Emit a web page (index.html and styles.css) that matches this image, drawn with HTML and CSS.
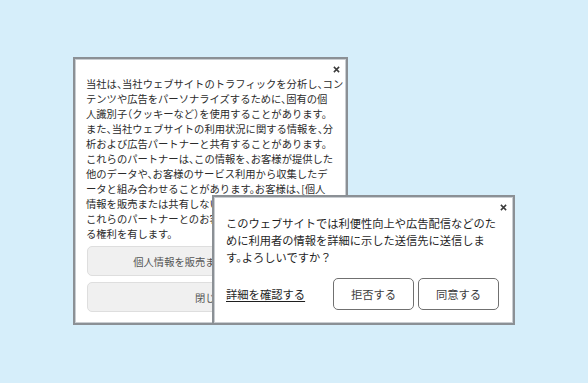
FILE: index.html
```html
<!DOCTYPE html>
<html lang="ja">

<head>
    <meta charset="UTF-8">
    <meta name="viewport" content="width=device-width, initial-scale=1.0">
    <title>Cookie Consent</title>
    <link rel="stylesheet" href="styles.css">
</head>

<body>
    <div class="stage">
        <div class="dialog dialog-back">
            <div class="close-row">
                <button class="close" aria-label="閉じる">
                    <svg viewBox="0 0 8 8" xmlns="http://www.w3.org/2000/svg">
                        <path d="M1 1L7 7M7 1L1 7" />
                    </svg>
                </button>
            </div>
            <p class="notice">
                <span class="line">当社は、当社ウェブサイトのトラフィックを分析し、コン</span>
                <span class="line">テンツや広告をパーソナライズするために、固有の個</span>
                <span class="line">人識別子（クッキーなど）を使用することがあります。</span>
                <span class="line">また、当社ウェブサイトの利用状況に関する情報を、分</span>
                <span class="line">析および広告パートナーと共有することがあります。</span>
                <span class="line">これらのパートナーは、この情報を、お客様が提供した</span>
                <span class="line">他のデータや、お客様のサービス利用から収集したデ</span>
                <span class="line">ータと組み合わせることがあります。お客様は、[個人</span>
                <span class="line">情報を販売または共有しないよう求める]ことにより、</span>
                <span class="line">これらのパートナーとのお客様の情報の共有を停止す</span>
                <span class="line">る権利を有します。</span>
            </p>
            <div class="stack">
                <button class="soft-btn">個人情報を販売または共有しない</button>
                <button class="soft-btn">閉じる</button>
            </div>
        </div>

        <div class="dialog dialog-front">
            <div class="close-row">
                <button class="close" aria-label="閉じる">
                    <svg viewBox="0 0 8 8" xmlns="http://www.w3.org/2000/svg">
                        <path d="M1 1L7 7M7 1L1 7" />
                    </svg>
                </button>
            </div>
            <p class="question">
                <span class="line">このウェブサイトでは利便性向上や広告配信などのた</span>
                <span class="line">めに利用者の情報を詳細に示した送信先に送信しま</span>
                <span class="line">す。よろしいですか？</span>
            </p>
            <div class="actions">
                <a class="details" href="#">詳細を確認する</a>
                <div class="choice">
                    <button class="line-btn">拒否する</button>
                    <button class="line-btn">同意する</button>
                </div>
            </div>
        </div>
    </div>
</body>

</html>
```

FILE: styles.css
```css
body {
    margin: 0;
    background-color: #d6eefa;
    /* Fondo azul claro */
    font-family: "Noto Sans CJK JP", "Noto Sans", sans-serif;
    font-feature-settings: "halt";
    /* Puntuacion a media anchura */
}

.stage {
    position: relative;
    width: 588px;
    height: 383px;
}

.dialog {
    position: absolute;
    box-sizing: border-box;
    display: flex;
    flex-direction: column;
    background-color: #ffffff;
    border: 2px solid #8b9095;
    box-shadow: inset 0 0 0 1px #c9cdd1;
}

.dialog-back {
    left: 73px;
    top: 57px;
    width: 275px;
    height: 268px;
    padding: 4px 12px 11px 11px;
}

.dialog-front {
    left: 212px;
    top: 195px;
    width: 303px;
    height: 130px;
    padding: 4px 14px 13px 12px;
}

.close-row {
    display: flex;
    justify-content: flex-end;
    height: 12px;
}

.dialog-back .close-row {
    margin-right: -7px;
}

.dialog-front .close-row {
    margin-right: -9px;
}

.close {
    width: 10px;
    height: 12px;
    padding: 0;
    border: none;
    background: none;
    display: flex;
    justify-content: center;
    align-items: center;
    cursor: pointer;
}

.close svg {
    width: 7px;
    height: 7px;
    stroke: #3a3a3a;
    stroke-width: 1.7;
    fill: none;
}

.line {
    display: block;
    white-space: nowrap;
}

.notice {
    margin: 0.5px 0 0;
    font-size: 10.3px;
    line-height: 15px;
    color: #2b2b2b;
}

.stack {
    display: flex;
    flex-direction: column;
    gap: 6px;
    margin-top: 5.5px;
    margin-left: 1px;
}

.soft-btn {
    height: 30px;
    padding: 0;
    font-family: inherit;
    font-feature-settings: "halt";
    font-size: 10.3px;
    color: #555555;
    background-color: #f0f0f0;
    border: 1px solid #dedede;
    border-radius: 5px;
}

.question {
    margin: 1.5px 0 0;
    font-size: 11.25px;
    line-height: 17px;
    color: #1f1f1f;
}

.actions {
    display: flex;
    justify-content: space-between;
    align-items: center;
    margin-top: 12.5px;
}

.details {
    font-size: 11.3px;
    color: #1f1f1f;
    text-decoration: underline;
    text-underline-offset: 2px;
}

.choice {
    display: flex;
    gap: 4px;
}

.line-btn {
    width: 81px;
    height: 32px;
    padding: 0;
    font-family: inherit;
    font-size: 11.3px;
    color: #3d3d3d;
    background-color: #ffffff;
    border: 1px solid #707070;
    border-radius: 5px;
}
```
